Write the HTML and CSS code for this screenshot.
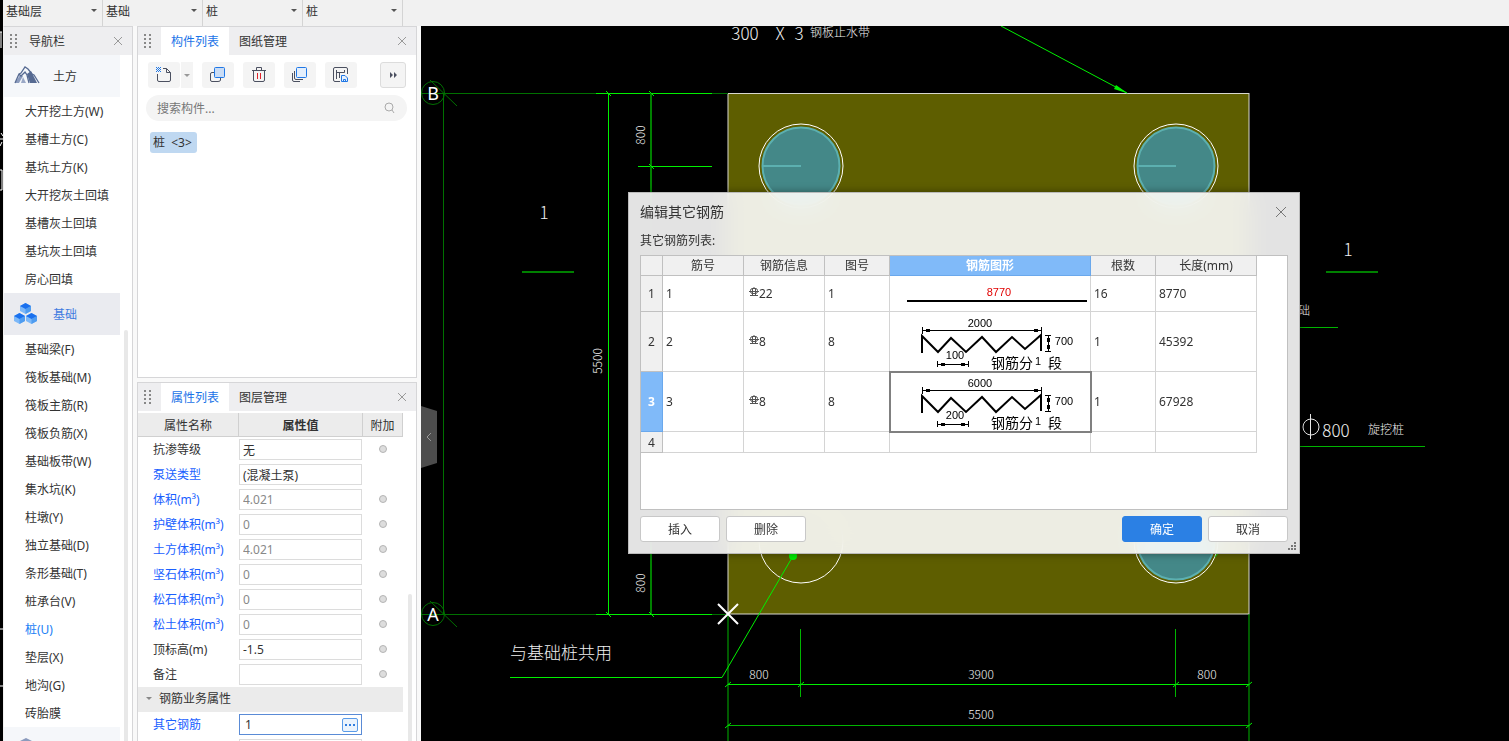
FILE: index.html
```
<!DOCTYPE html>
<html lang="zh-CN">
<head>
  <meta charset="UTF-8" />
  <title>编辑其它钢筋</title>
  <meta name="viewport" content="width=device-width, initial-scale=1.0" />
  <link rel="stylesheet" href="styles.css">
</head>
<body>
  <div class="app">
    <svg class="edge" aria-hidden="true">
      <path d="M1 32V48M0 32H2M1 133L3 136M0 139H3M2 142L0 146M0 170H2V190H0M0 629H3M0 686H3" />
    </svg>

    <div class="window">
      <header class="topbar">
        <div class="pick"><select aria-label="楼层"><option>基础层</option></select></div>
        <div class="pick"><select aria-label="分类"><option>基础</option></select></div>
        <div class="pick"><select aria-label="构件类型"><option>桩</option></select></div>
        <div class="pick"><select aria-label="构件"><option>桩</option></select></div>
      </header>

      <div class="workspace">
        <aside class="panel nav">
          <div class="panel-head">
            <i class="grip"></i>
            <span class="nav-title">导航栏</span>
            <button class="close" aria-label="关闭"><svg width="10" height="10"><path d="M1 1L9 9M9 1L1 9" /></svg></button>
          </div>
          <div class="nav-body">
            <a href="#" class="group">
              <svg width="26" height="20" viewBox="0 0 26 20">
                <path d="M1 17L6 9L9 10L5 17Z" fill="#8b9bbd" />
                <path d="M13 8L17 5L23 17H16Z" fill="#566a92" />
                <path d="M9 11L12 17H7Z" fill="#9aa8c6" />
                <path d="M1 17L5 8L7 7L11 1L14 3L18 8L20 9L25 17M5 8L7 10L11 6L13 9L15 17" fill="none" stroke="#566a92" stroke-width="1.3" />
              </svg>
              <span>土方</span>
            </a>
            <a href="#" class="item">大开挖土方(W)</a>
            <a href="#" class="item">基槽土方(C)</a>
            <a href="#" class="item">基坑土方(K)</a>
            <a href="#" class="item">大开挖灰土回填</a>
            <a href="#" class="item">基槽灰土回填</a>
            <a href="#" class="item">基坑灰土回填</a>
            <a href="#" class="item">房心回填</a>
            <a href="#" class="group open">
              <svg width="26" height="24" viewBox="0 0 26 24">
                <g id="cube">
                  <path d="M6 4L11.500 1L17 4V9L11.500 12L6 9Z" fill="#7db8f8" />
                  <path d="M11.500 7L17 4V9L11.500 12Z" fill="#4f9cf0" />
                  <path d="M6 4L11.500 1L17 4L11.500 7Z" fill="#1a70ee" />
                </g>
                <use href="#cube" x="-6" y="10" />
                <use href="#cube" x="6" y="10" />
              </svg>
              <span>基础</span>
            </a>
            <a href="#" class="item">基础梁(F)</a>
            <a href="#" class="item">筏板基础(M)</a>
            <a href="#" class="item">筏板主筋(R)</a>
            <a href="#" class="item">筏板负筋(X)</a>
            <a href="#" class="item">基础板带(W)</a>
            <a href="#" class="item">集水坑(K)</a>
            <a href="#" class="item">柱墩(Y)</a>
            <a href="#" class="item">独立基础(D)</a>
            <a href="#" class="item">条形基础(T)</a>
            <a href="#" class="item">桩承台(V)</a>
            <a href="#" class="item active">桩(U)</a>
            <a href="#" class="item">垫层(X)</a>
            <a href="#" class="item">地沟(G)</a>
            <a href="#" class="item">砖胎膜</a>
            <a href="#" class="group" aria-label="其它">
              <svg width="26" height="20" viewBox="0 0 26 20"><path d="M4 4L12 0L20 4L12 8Z" fill="#8b9bbd" /></svg>
            </a>
          </div>
          <i class="scroll"></i>
        </aside>

        <div class="middle">
          <section class="panel list">
            <div class="panel-head">
              <i class="grip"></i>
              <button class="tab on">构件列表</button>
              <button class="tab">图纸管理</button>
              <button class="close" aria-label="关闭"><svg width="10" height="10"><path d="M1 1L9 9M9 1L1 9" /></svg></button>
            </div>
            <div class="tools">
              <div class="split">
                <button class="tool" aria-label="新建">
                  <svg width="18" height="18" viewBox="0 0 18 18">
                    <path d="M8 2.500H11.500L15.500 6.500V14Q15.500 15.500 14 15.500H4Q2.500 15.500 2.500 14V8M11.500 2.500V6.500H15.500" />
                    <path class="blue" d="M1 1.500H6M2 2.500H6M1 3.500H6M2 4.500H6M1 5.500H6" stroke-dasharray="1 1" />
                  </svg>
                </button>
                <button class="drop" aria-label="更多新建"></button>
              </div>
              <button class="tool" aria-label="复制">
                <svg width="18" height="18" viewBox="0 0 18 18">
                  <path d="M5 6.500H3Q1.500 6.500 1.500 8V14Q1.500 15.500 3 15.500H9Q11.500 15.500 11.500 14V12" />
                  <rect class="blue" x="5.500" y="1.500" width="10" height="10" rx="1" fill="#c9dcf5" />
                </svg>
              </button>
              <button class="tool" aria-label="删除">
                <svg width="18" height="18" viewBox="0 0 18 18">
                  <path d="M2 4.500H16M6.500 4.500V1.500H11.500V4.500M3.500 5V14Q3.500 15.500 5 15.500H13Q14.500 15.500 14.500 14V5" />
                  <path d="M7.500 7V13M10.500 7V13" stroke="#e0242b" />
                </svg>
              </button>
              <button class="tool" aria-label="层间复制">
                <svg width="18" height="18" viewBox="0 0 18 18">
                  <path d="M3.500 5V12Q3.500 13.500 5 13.500H12M1.500 7V14Q1.500 15.500 3 15.500H9" />
                  <rect class="blue" x="5.500" y="1.500" width="10" height="10" rx="1" fill="#e4effc" />
                </svg>
              </button>
              <button class="tool" aria-label="存档">
                <svg width="18" height="18" viewBox="0 0 18 18">
                  <path d="M15.500 8V3Q15.500 1.500 14 1.500H3Q1.500 1.500 1.500 3V14Q1.500 15.500 3 15.500H8M4.500 4V13M5 6.500H12.500V4M7.500 7V12" />
                  <path class="blue" d="M9.500 9.500H13L15.500 12V15.500H9.500Z" fill="#e4effc" />
                  <path class="blue" d="M11.500 15V13.500H13.500V15" />
                </svg>
              </button>
              <button class="tool more" aria-label="展开">
                <svg width="10" height="8" viewBox="0 0 10 8"><path class="solid" d="M2 1L5 4L2 7ZM6 1L9 4L6 7Z" /></svg>
              </button>
            </div>
            <label class="search">
              <input type="text" placeholder="搜索构件..." aria-label="搜索构件">
              <svg width="12" height="12" viewBox="0 0 12 12"><circle cx="5" cy="5" r="4" /><path d="M8 8L10 11" /></svg>
            </label>
            <button class="chip">桩 &nbsp;&lt;3&gt;</button>
          </section>

          <section class="panel props">
            <div class="panel-head">
              <i class="grip"></i>
              <button class="tab on">属性列表</button>
              <button class="tab">图层管理</button>
              <button class="close" aria-label="关闭"><svg width="10" height="10"><path d="M1 1L9 9M9 1L1 9" /></svg></button>
            </div>
            <table class="prop-table">
              <thead>
                <tr><th class="c-name">属性名称</th><th class="c-value">属性值</th><th class="c-extra">附加</th></tr>
              </thead>
              <tbody>
                <tr><td><label for="p1">抗渗等级</label></td><td><input id="p1" type="text" value="无"></td><td><input type="radio" aria-label="附加"></td></tr>
                <tr class="key"><td><label for="p2">泵送类型</label></td><td><input id="p2" type="text" value="(混凝土泵)"></td><td></td></tr>
                <tr class="key"><td><label for="p3">体积(m³)</label></td><td><input id="p3" type="text" value="4.021" readonly></td><td><input type="radio" aria-label="附加"></td></tr>
                <tr class="key"><td><label for="p4">护壁体积(m³)</label></td><td><input id="p4" type="text" value="0" readonly></td><td><input type="radio" aria-label="附加"></td></tr>
                <tr class="key"><td><label for="p5">土方体积(m³)</label></td><td><input id="p5" type="text" value="4.021" readonly></td><td><input type="radio" aria-label="附加"></td></tr>
                <tr class="key"><td><label for="p6">坚石体积(m³)</label></td><td><input id="p6" type="text" value="0" readonly></td><td><input type="radio" aria-label="附加"></td></tr>
                <tr class="key"><td><label for="p7">松石体积(m³)</label></td><td><input id="p7" type="text" value="0" readonly></td><td><input type="radio" aria-label="附加"></td></tr>
                <tr class="key"><td><label for="p8">松土体积(m³)</label></td><td><input id="p8" type="text" value="0" readonly></td><td><input type="radio" aria-label="附加"></td></tr>
                <tr><td><label for="p9">顶标高(m)</label></td><td><input id="p9" type="text" value="-1.5"></td><td><input type="radio" aria-label="附加"></td></tr>
                <tr><td><label for="p10">备注</label></td><td><input id="p10" type="text"></td><td><input type="radio" aria-label="附加"></td></tr>
                <tr class="category"><td colspan="3">钢筋业务属性</td></tr>
                <tr class="key"><td><label for="p11">其它钢筋</label></td><td><div class="editing"><input id="p11" type="text" value="1"><button aria-label="编辑其它钢筋"><i></i><i></i><i></i></button></div></td><td></td></tr>
                <tr><td></td><td><input type="text" aria-label="属性"></td><td></td></tr>
              </tbody>
            </table>
            <i class="scroll"></i>
          </section>
        </div>

        <main class="canvas">
          <svg class="drawing">
            <g transform="translate(-421 -26)">
              <rect class="slab" x="728" y="93.500" width="521" height="520.500" />

              <!-- axes -->
              <g class="axis">
                <path d="M421 93.500H728M421 614.500H728M443.500 93V614M430 80L457 106M430 601L457 627" />
                <circle cx="433" cy="93" r="11.500" />
                <circle cx="433" cy="614" r="11.500" />
              </g>
              <text class="mark" x="433" y="100">B</text>
              <text class="mark" x="433" y="621">A</text>

              <!-- dimension lines -->
              <path class="dim" d="M596 93.500H712M596 614.500H712M608.500 93V614M728 684.500H1249M638 166.500H712" />
              <path class="dim mid" d="M728 725.500H1249M728 614V741M1249 614V741M800.500 629V697M1175.500 629V697" />
              <path class="dim thick" d="M651 93V614M522 272H574M1326 272H1378" />
              <path class="dim" d="M606 91L611 96M649 91L654 96M649 164L654 169M606 612L611 617M649 612L654 617M725 687L731 682M798 687L804 682M1173 687L1179 682M1246 687L1252 682M725 728L731 723M1246 728L1252 723" />
              <path class="dim mid" d="M1300 327.500H1338M1300 446.500H1425" />

              <!-- piles -->
              <g class="pile">
                <circle class="ring" cx="801" cy="166" r="42" />
                <circle class="core" cx="801" cy="166" r="38.500" />
                <path d="M763 166H801" />
                <circle class="ring" cx="1176" cy="166" r="42" />
                <circle class="core" cx="1176" cy="166" r="38.500" />
                <path d="M1138 166H1176" />
                <circle class="ring" cx="801" cy="541" r="42" />
                <circle class="ring" cx="1176" cy="541" r="42" />
                <circle class="core" cx="1176" cy="541" r="38.500" />
              </g>

              <!-- leaders -->
              <path class="dim" d="M1001 26L1127 93M793 556L722 677.500H510M1215 557L1219 552" />
              <path class="tip" d="M1128 93.500L1114 89L1116 85Z" />
              <circle class="tip" cx="793" cy="556" r="4" />
              <path class="cross" d="M718 604L738 624M738 604L718 624" />

              <g class="note">
                <text class="big" x="745" y="40">300</text>
                <text class="big" x="780" y="40">X</text>
                <text class="big" x="799" y="40">3</text>
                <text x="840" y="37">钢板止水带</text>
                <text class="big" x="544" y="219">1</text>
                <text class="big" x="1348" y="256">1</text>
                <text transform="translate(645 135) rotate(-90)">800</text>
                <text transform="translate(602 361) rotate(-90)">5500</text>
                <text transform="translate(645 583) rotate(-90)">800</text>
                <text x="759" y="679">800</text>
                <text x="981" y="679">3900</text>
                <text x="1207" y="679">800</text>
                <text x="981" y="719">5500</text>
                <text class="big" x="561" y="659">与基础桩共用</text>
                <text x="1304" y="315">础</text>
                <text class="big" x="1336" y="437">800</text>
                <text x="1386" y="434">旋挖桩</text>
                <circle cx="1311" cy="427" r="8" />
                <path d="M1310.500 414V439" />
              </g>
            </g>
          </svg>

          <button class="handle" aria-label="收起"><svg width="6" height="10"><path d="M5 1L1 5L5 9" /></svg></button>

          <div class="dialog" role="dialog" aria-labelledby="dlg-title">
            <div class="dialog-head">
              <h1 id="dlg-title">编辑其它钢筋</h1>
              <button class="close" aria-label="关闭"><svg width="12" height="12"><path d="M1 1L11 11M11 1L1 11" /></svg></button>
            </div>
            <p class="caption">其它钢筋列表:</p>
            <div class="grid">
              <table class="bars">
                <colgroup>
                  <col class="w-index"><col class="w-wide"><col class="w-wide"><col class="w-slim"><col class="w-shape"><col class="w-slim"><col class="w-length">
                </colgroup>
                <thead>
                  <tr><th></th><th>筋号</th><th>钢筋信息</th><th>图号</th><th class="current">钢筋图形</th><th>根数</th><th>长度(mm)</th></tr>
                </thead>
                <tbody>
                  <tr class="low">
                    <th>1</th><td>1</td>
                    <td><svg class="rebar" width="10" height="10"><rect x="1.500" y="1.500" width="7" height="5" rx="2" /><path d="M3.500 1V9M6.500 1V9M5 0V2M0 4.500H10M1 8.500H9" /></svg>22</td>
                    <td>1</td>
                    <td class="shape">
                      <svg width="200" height="35">
                        <path class="bar" d="M17 25H197" />
                        <text class="red" x="109" y="20">8770</text>
                      </svg>
                    </td>
                    <td>16</td><td>8770</td>
                  </tr>
                  <tr class="tall">
                    <th>2</th><td>2</td>
                    <td><svg class="rebar" width="10" height="10"><rect x="1.500" y="1.500" width="7" height="5" rx="2" /><path d="M3.500 1V9M6.500 1V9M5 0V2M0 4.500H10M1 8.500H9" /></svg>8</td>
                    <td>8</td>
                    <td class="shape">
                      <svg width="200" height="59">
                        <g id="zigzag">
                          <path class="bar" d="M32 41V24L48 40L61 26L76 40L92 25L106 40L122 25L135 37L151 23V39" />
                          <path class="rule" d="M32.500 15V22M151.500 15V22M32 18.500H151M47.500 49V55M78.500 49V55M47 52.500H78M155 23.500H161M155 39.500H161M158.500 23V39" />
                          <path class="dot" d="M36 17h4v3h-4zM144 17h4v3h-4zM51 51h4v3h-4zM71 51h4v3h-4zM157 26h3v4h-3zM157 33h3v4h-3z" />
                          <text class="seg" x="122" y="56">钢筋分</text>
                          <text class="seg" x="165" y="56">段</text>
                          <text x="148" y="53">1</text>
                          <text x="174" y="33">700</text>
                        </g>
                        <text x="90" y="15">2000</text>
                        <text x="65" y="47">100</text>
                      </svg>
                    </td>
                    <td>1</td><td>45392</td>
                  </tr>
                  <tr class="tall">
                    <th class="current">3</th><td>3</td>
                    <td><svg class="rebar" width="10" height="10"><rect x="1.500" y="1.500" width="7" height="5" rx="2" /><path d="M3.500 1V9M6.500 1V9M5 0V2M0 4.500H10M1 8.500H9" /></svg>8</td>
                    <td>8</td>
                    <td class="shape selected">
                      <svg width="200" height="59">
                        <use href="#zigzag" />
                        <text x="90" y="15">6000</text>
                        <text x="65" y="47">200</text>
                      </svg>
                    </td>
                    <td>1</td><td>67928</td>
                  </tr>
                  <tr class="blank"><th>4</th><td></td><td></td><td></td><td></td><td></td><td></td></tr>
                </tbody>
              </table>
            </div>
            <div class="actions">
              <button class="btn">插入</button>
              <button class="btn">删除</button>
              <button class="btn primary">确定</button>
              <button class="btn">取消</button>
            </div>
            <svg class="resize" width="8" height="8"><path d="M6 0h2v2h-2zM3 3h2v2h-2zM6 3h2v2h-2zM0 6h2v2h-2zM3 6h2v2h-2zM6 6h2v2h-2z" /></svg>
          </div>
        </main>
      </div>
    </div>
  </div>
</body>
</html>
```
FILE: styles.css
```
* {
  box-sizing: border-box;
}
body {
  margin: 0;
  font-family: "Noto Sans", "Noto Sans CJK SC", sans-serif;
  font-size: 12px;
  line-height: 18px;
  color: #333;
  background: #000;
}
button, input, select {
  font: inherit;
  color: inherit;
  margin: 0;
  padding: 0;
  border: 0;
  background: none;
}
a {
  color: inherit;
  text-decoration: none;
}
svg {
  display: block;
  flex: none;
}
.app {
  display: flex;
  height: 100vh;
  overflow: hidden;
}
.edge {
  width: 3px;
  height: 100%;
  background: #000;
  fill: none;
  stroke: #fff;
}
.window {
  flex: 1;
  min-width: 0;
  display: flex;
  flex-direction: column;
  background: #f9f9f9;
}

/* top bar */
.topbar {
  display: flex;
  height: 26px;
  background: #f1f1f1;
}
.pick {
  position: relative;
  width: 100px;
  border-right: 1px solid #d4d4d4;
}
.pick select {
  width: 100%;
  height: 23px;
  padding-left: 3px;
  appearance: none;
}
.pick::after, .drop::after {
  content: "";
  border: 3px solid transparent;
  border-top-color: #555;
  border-bottom: 0;
}
.pick::after {
  position: absolute;
  right: 5px;
  top: 9px;
}

/* docked panels */
.workspace {
  flex: 1;
  min-height: 0;
  display: flex;
}
.panel {
  position: relative;
  background: #fff;
  border: 1px solid #d6d6d8;
  overflow: hidden;
}
.panel-head {
  display: flex;
  align-items: center;
  height: 28px;
  background: #eeeef0;
}
.grip {
  width: 7px;
  height: 14px;
  margin: 0 10px 0 6px;
  background: radial-gradient(circle at 1px 1px, #888 1px, transparent 1px) 0 0 / 5px 4px;
}
.close {
  margin-left: auto;
  padding: 0 9px;
}
.close svg {
  fill: none;
  stroke: #999;
}
.tab {
  width: 68px;
  height: 28px;
  padding-top: 2px;
}
.tab.on {
  color: #1a73e8;
  background: #fff;
}
.scroll {
  position: absolute;
  right: 4px;
  bottom: 0;
  width: 4px;
  border-radius: 2px 2px 0 0;
  background: #e8e8e8;
}

/* navigation */
.nav {
  width: 130px;
  margin-right: 4px;
  border-bottom: 0;
  border-left-color: #f1f1f1;
}
.nav-title {
  margin-left: 2px;
  padding-top: 2px;
}
.nav-body {
  width: 116px;
}
.nav .scroll {
  top: 303px;
}
.group {
  display: flex;
  align-items: center;
  gap: 13px;
  height: 42px;
  padding-left: 10px;
  background: #f5f7fa;
}
.group span {
  padding-top: 2px;
}
.group.open {
  background: #eaebf0;
  color: #3f7be0;
}
.item {
  display: block;
  height: 28px;
  padding-left: 21px;
  line-height: 30px;
  white-space: nowrap;
}
.item.active {
  color: #1a80f5;
}

.middle {
  width: 284px;
  padding-right: 4px;
  display: flex;
  flex-direction: column;
  gap: 4px;
}
.list {
  height: 352px;
}
.tools {
  display: flex;
  gap: 9px;
  padding: 7px 10px;
}
.tool {
  display: flex;
  align-items: center;
  justify-content: center;
  width: 32px;
  height: 26px;
  border-radius: 3px;
  background: #f4f4f4;
}
.tool svg {
  fill: none;
  stroke: #4b5060;
}
.tool .blue {
  stroke: #1f77e6;
}
.tool .solid {
  fill: #4b5060;
  stroke: none;
}
.tool.more {
  width: 26px;
  margin-left: auto;
  border: 1px solid #dcdcdc;
}
.split {
  display: flex;
  gap: 1px;
}
.drop {
  display: flex;
  align-items: center;
  justify-content: center;
  width: 12px;
  background: #f4f4f4;
}
.drop::after {
  border-top-color: #999;
}
.search {
  display: flex;
  align-items: center;
  height: 26px;
  margin: 0 9px 0 8px;
  padding: 0 11px;
  border-radius: 13px;
  background: #f4f4f4;
}
.search input {
  flex: 1;
  min-width: 0;
  padding-top: 2px;
  outline: 0;
}
.search input::placeholder {
  color: #777;
}
.search svg {
  fill: none;
  stroke: #aaa;
}
.chip {
  height: 21px;
  margin: 11px 12px;
  padding: 0 5px 0 3px;
  border-radius: 3px;
  background: #bfd8f1;
}

/* properties */
.props {
  flex: 1;
  min-height: 0;
  border-bottom: 0;
}
.props .scroll {
  top: 211px;
}
.prop-table {
  width: 265px;
  margin-top: 2px;
  border-collapse: separate;
  border-spacing: 0;
  table-layout: fixed;
}
.prop-table th {
  height: 24px;
  padding: 2px 0 0;
  font-weight: normal;
  background: #ececec;
  border-right: 1px solid #d0d0d0;
  border-bottom: 1px solid #d0d0d0;
}
.prop-table th.c-name {
  width: 101px;
}
.prop-table th.c-value {
  width: 124px;
  font-weight: bold;
}
.prop-table td {
  height: 25px;
  padding: 0;
}
.prop-table td:first-child {
  padding-left: 15px;
  white-space: nowrap;
}
.prop-table td:last-child {
  padding: 0 1px 1px 0;
  text-align: center;
}
.prop-table input[type=text] {
  display: block;
  width: 123px;
  height: 21px;
  padding: 0 3px;
  border: 1px solid #dcdcdc;
  background: #fff;
}
.prop-table input[readonly] {
  color: #888;
}
.prop-table input[type=radio] {
  appearance: none;
  display: block;
  width: 8px;
  height: 8px;
  margin: 0 auto;
  border: 1px solid #b4b4b4;
  border-radius: 50%;
  background: #ddd;
}
.prop-table .key label {
  color: #1a5fff;
}
.prop-table .category td {
  padding-left: 8px;
  text-align: left;
  background: #ebebeb;
}
.category td::before {
  content: "";
  display: inline-block;
  margin-right: 7px;
  vertical-align: 3px;
  border: 3px solid transparent;
  border-top-color: #888;
  border-bottom: 0;
}
.editing {
  display: flex;
  align-items: center;
  width: 123px;
  height: 21px;
  padding-right: 3px;
  border: 1px solid #5a8bd6;
}
.prop-table .editing input {
  flex: 1;
  min-width: 0;
  height: 19px;
  padding-left: 5px;
  border: 0;
}
.editing button {
  display: flex;
  align-items: center;
  justify-content: center;
  gap: 2px;
  width: 16px;
  height: 14px;
  border: 1px solid #5a9be8;
  border-radius: 2px;
  background: #eaf3fd;
}
.editing button i {
  width: 2px;
  height: 2px;
  background: #2f7de0;
}

/* drawing area */
.canvas {
  position: relative;
  flex: 1;
  min-width: 0;
  overflow: hidden;
  background: #000;
}
.drawing {
  width: 100%;
  height: 100%;
}
.slab {
  fill: #5e5e00;
  stroke: #d8d8d0;
}
.axis {
  fill: none;
  stroke: #007000;
}
.mark {
  fill: #fff;
  font-size: 18px;
  text-anchor: middle;
}
.dim {
  fill: none;
  stroke: #00f000;
}
.dim.mid {
  stroke: #00b400;
}
.dim.thick {
  stroke: #008000;
  stroke-width: 2;
}
.pile {
  fill: none;
  stroke: #5cb0b0;
  stroke-width: 2;
}
.pile .ring {
  stroke: #fff;
  stroke-width: 1;
}
.pile .core {
  fill: #448888;
}
.tip {
  fill: #00f000;
}
.cross {
  stroke: #fff;
  stroke-width: 2;
}
.note {
  fill: #f0f0f0;
  font-family: "Noto Sans CJK SC", sans-serif;
  font-weight: 300;
  font-size: 12px;
  text-anchor: middle;
}
.note .big {
  font-size: 17px;
}
.note circle, .note path {
  fill: none;
  stroke: #e8e8e8;
}
.handle {
  position: absolute;
  left: 0;
  top: 380px;
  display: flex;
  align-items: center;
  justify-content: center;
  width: 16px;
  height: 62px;
  background: #4d4d4d;
  clip-path: polygon(0 0, 100% 5px, 100% 57px, 0 100%);
}
.handle svg {
  fill: none;
  stroke: #999;
}

/* dialog */
.dialog {
  position: absolute;
  left: 207px;
  top: 166px;
  display: flex;
  flex-direction: column;
  width: 672px;
  height: 362px;
  padding: 0 11px 11px;
  border: 1px solid #bbb;
  background: rgba(255, 255, 255, 0.89);
  backdrop-filter: blur(12px);
  box-shadow: 0 0 8px rgba(0, 0, 0, 0.4);
}
.dialog-head {
  display: flex;
  align-items: center;
  height: 38px;
}
.dialog-head h1 {
  margin: 0;
  font-size: 14px;
  font-weight: normal;
}
.dialog-head .close {
  padding: 0 1px;
}
.dialog-head .close svg {
  stroke: #777;
}
.caption {
  margin: 0;
  padding: 1px 0 5px;
}
.grid {
  flex: 1;
  min-height: 0;
  overflow: hidden;
  border: 1px solid #c0c0c0;
  background: #fff;
}
.bars {
  width: 616px;
  border-collapse: separate;
  border-spacing: 0;
  table-layout: fixed;
}
.w-index { width: 22px; }
.w-wide { width: 81px; }
.w-slim { width: 65px; }
.w-shape { width: 201px; }
.w-length { width: 101px; }
.bars th {
  height: 20px;
  padding: 1px 0 0;
  font-weight: normal;
  background: #f0f0f0;
  border-right: 1px solid #c0c0c0;
  border-bottom: 1px solid #c0c0c0;
}
.bars th.current {
  color: #fff;
  font-weight: bold;
  background: #80baf9;
  border-color: #6aa8ec;
}
.bars td {
  padding: 0 3px;
  border-right: 1px solid #d4d4d4;
  border-bottom: 1px solid #d4d4d4;
}
.bars td:nth-child(3) {
  padding-left: 5px;
}
.bars .low td {
  height: 36px;
}
.bars .tall td {
  height: 60px;
}
.bars .blank td {
  height: 21px;
}
.bars td.shape {
  padding: 0;
}
.bars .selected {
  outline: 2px solid #808080;
  outline-offset: -1px;
}
.rebar {
  display: inline-block;
  vertical-align: 1px;
  fill: none;
  stroke: #555;
}
.shape text {
  font-family: "Liberation Sans", sans-serif;
  font-size: 11px;
  fill: #000;
  text-anchor: middle;
}
.shape text.red {
  fill: #e00000;
}
.shape text.seg {
  font-family: "Noto Sans CJK SC", sans-serif;
  font-size: 14px;
}
.bar {
  fill: none;
  stroke: #000;
  stroke-width: 2;
}
.rule {
  stroke: #000;
}
.dot {
  fill: #000;
}
.actions {
  display: flex;
  gap: 6px;
  padding-top: 6px;
}
.btn {
  width: 80px;
  height: 26px;
  padding-top: 2px;
  border: 1px solid #c8c8c8;
  border-radius: 3px;
  background: #fff;
}
.btn.primary {
  margin-left: auto;
  border-color: #2b80e4;
  background: #2b80e4;
  color: #fff;
}
.resize {
  position: absolute;
  right: 3px;
  bottom: 3px;
  fill: #777;
}
```
